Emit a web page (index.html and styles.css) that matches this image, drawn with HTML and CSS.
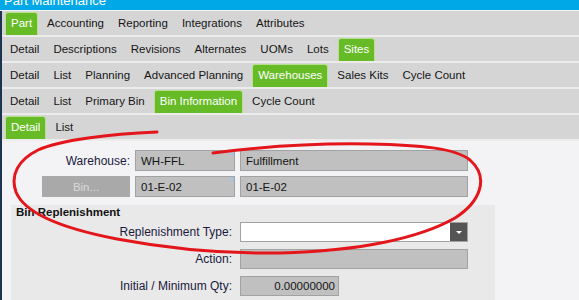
FILE: index.html
```html
<!DOCTYPE html>
<html>
<head>
<meta charset="utf-8">
<link rel="stylesheet" href="styles.css">
</head>
<body>
<div class="window">
  <div class="titlebar"><span class="title">Part Maintenance</span></div>
  <div class="main">
    <div class="tabrow">
      <div class="tab active">Part</div>
      <div class="tab">Accounting</div>
      <div class="tab">Reporting</div>
      <div class="tab">Integrations</div>
      <div class="tab">Attributes</div>
    </div>
    <div class="tabrow">
      <div class="tab">Detail</div>
      <div class="tab">Descriptions</div>
      <div class="tab">Revisions</div>
      <div class="tab">Alternates</div>
      <div class="tab">UOMs</div>
      <div class="tab">Lots</div>
      <div class="tab active">Sites</div>
    </div>
    <div class="tabrow">
      <div class="tab">Detail</div>
      <div class="tab">List</div>
      <div class="tab">Planning</div>
      <div class="tab">Advanced Planning</div>
      <div class="tab active">Warehouses</div>
      <div class="tab">Sales Kits</div>
      <div class="tab">Cycle Count</div>
    </div>
    <div class="tabrow">
      <div class="tab">Detail</div>
      <div class="tab">List</div>
      <div class="tab">Primary Bin</div>
      <div class="tab active">Bin Information</div>
      <div class="tab">Cycle Count</div>
    </div>
    <div class="tabrow">
      <div class="tab active">Detail</div>
      <div class="tab">List</div>
    </div>
    <div class="content">
      <div class="topform">
        <div class="label">Warehouse:</div>
        <div class="field marked">WH-FFL</div>
        <div class="field">Fulfillment</div>
        <div class="btncell"><div class="btn">Bin...</div></div>
        <div class="field marked">01-E-02</div>
        <div class="field">01-E-02</div>
      </div>
      <div class="group">
        <div class="grouphead">Bin Replenishment</div>
        <div class="groupform">
          <div class="label">Replenishment Type:</div>
          <div class="combo"><div class="combobtn"><span class="caret"></span></div></div>
          <div class="label">Action:</div>
          <div class="field"></div>
          <div class="label">Initial / Minimum Qty:</div>
          <div class="field num">0.00000000</div>
        </div>
      </div>
    </div>
  </div>
  <svg class="annot" width="579" height="300" viewBox="0 0 579 300">
    <path d="M157,132 C110,134 60,140 38,150 C18,160 10,175 16,192 C24,212 60,228 117,239 C170,249 220,254 280,253 C360,251 420,238 455,218 C480,202 490,178 470,160 C455,148 420,145 370,144 C320,143 260,147 213,153" fill="none" stroke="#e3161c" stroke-width="3" stroke-linecap="round"/>
  </svg>
</div>
</body>
</html>
```
FILE: styles.css
```css
* { box-sizing: border-box; }
html, body { margin: 0; padding: 0; }
body {
  width: 579px;
  height: 300px;
  overflow: hidden;
  font-family: "Liberation Sans", Arial, sans-serif;
  background: #f3f3f5;
}
.window {
  position: relative;
  width: 579px;
  height: 300px;
  display: flex;
  flex-direction: column;
  overflow: hidden;
}
.titlebar {
  flex: none;
  height: 11px;
  background: #00a8e8;
  border-bottom: 1px solid #f4f4f4;
  overflow: hidden;
  padding-left: 4px;
}
.title {
  display: block;
  color: #fff;
  font-size: 13px;
  line-height: 13px;
  margin-top: -6px;
}
.main {
  flex: 1;
  min-height: 0;
  display: flex;
  flex-direction: column;
  border-left: 2px solid #1d3451;
}
.tabrow {
  flex: none;
  height: 26px;
  background: #d5d5d5;
  border-bottom: 2px solid #ececec;
  display: flex;
  align-items: stretch;
  padding-left: 1px;
}
.tab {
  display: flex;
  align-items: center;
  padding: 0 7px;
  font-size: 11.5px;
  color: #161616;
  white-space: nowrap;
}
.tab.active {
  margin: 1px 2px 0;
  padding: 0 5px 2px;
  background: #67bb27;
  color: #fff;
  border: 1px solid #b8e08e;
  border-bottom: none;
  border-radius: 3px 3px 0 0;
}
.content {
  flex: 1;
  min-height: 0;
  background: #f3f3f5;
  padding-top: 9px;
}
.topform {
  display: grid;
  grid-template-columns: 128px 100px 228px;
  grid-auto-rows: 21px;
  column-gap: 5px;
  row-gap: 5px;
}
.label {
  font-size: 12px;
  color: #1a1a3c;
  text-align: right;
  display: flex;
  align-items: center;
  justify-content: flex-end;
  white-space: nowrap;
}
.field {
  position: relative;
  background: #c0c0c0;
  border: 1px solid #a2a2a2;
  font-size: 11.5px;
  color: #141414;
  padding-left: 5px;
  display: flex;
  align-items: center;
}
.field.marked::after {
  content: "";
  position: absolute;
  top: 0;
  right: 0;
  border-style: solid;
  border-width: 0 6px 6px 0;
  border-color: transparent #a9c2dd transparent transparent;
}
.btncell {
  display: flex;
  justify-content: flex-end;
}
.btn {
  width: 88px;
  background: #a9a9a9;
  color: #d9d9d9;
  font-size: 11.5px;
  display: flex;
  align-items: center;
  justify-content: center;
}
.group {
  margin: 8px 0 0 9px;
  width: 484px;
  height: 120px;
  background: #e9e9e9;
}
.grouphead {
  font-size: 11.5px;
  font-weight: bold;
  color: #111;
  padding-left: 5px;
  line-height: 14px;
}
.groupform {
  margin-top: 3px;
  display: grid;
  grid-template-columns: 221px 228px;
  grid-auto-rows: 20px;
  column-gap: 8px;
  row-gap: 7px;
}
.combo {
  background: #fff;
  border: 1px solid #a2a2a2;
  display: flex;
  justify-content: flex-end;
}
.combobtn {
  width: 17px;
  background: #555555;
  display: flex;
  align-items: center;
  justify-content: center;
}
.caret {
  width: 0;
  height: 0;
  border-left: 3px solid transparent;
  border-right: 3px solid transparent;
  border-top: 3px solid #fff;
}
.field.num {
  width: 99px;
  justify-content: flex-end;
  padding-right: 3px;
}
.annot {
  position: absolute;
  left: 0;
  top: 0;
  pointer-events: none;
}
```
